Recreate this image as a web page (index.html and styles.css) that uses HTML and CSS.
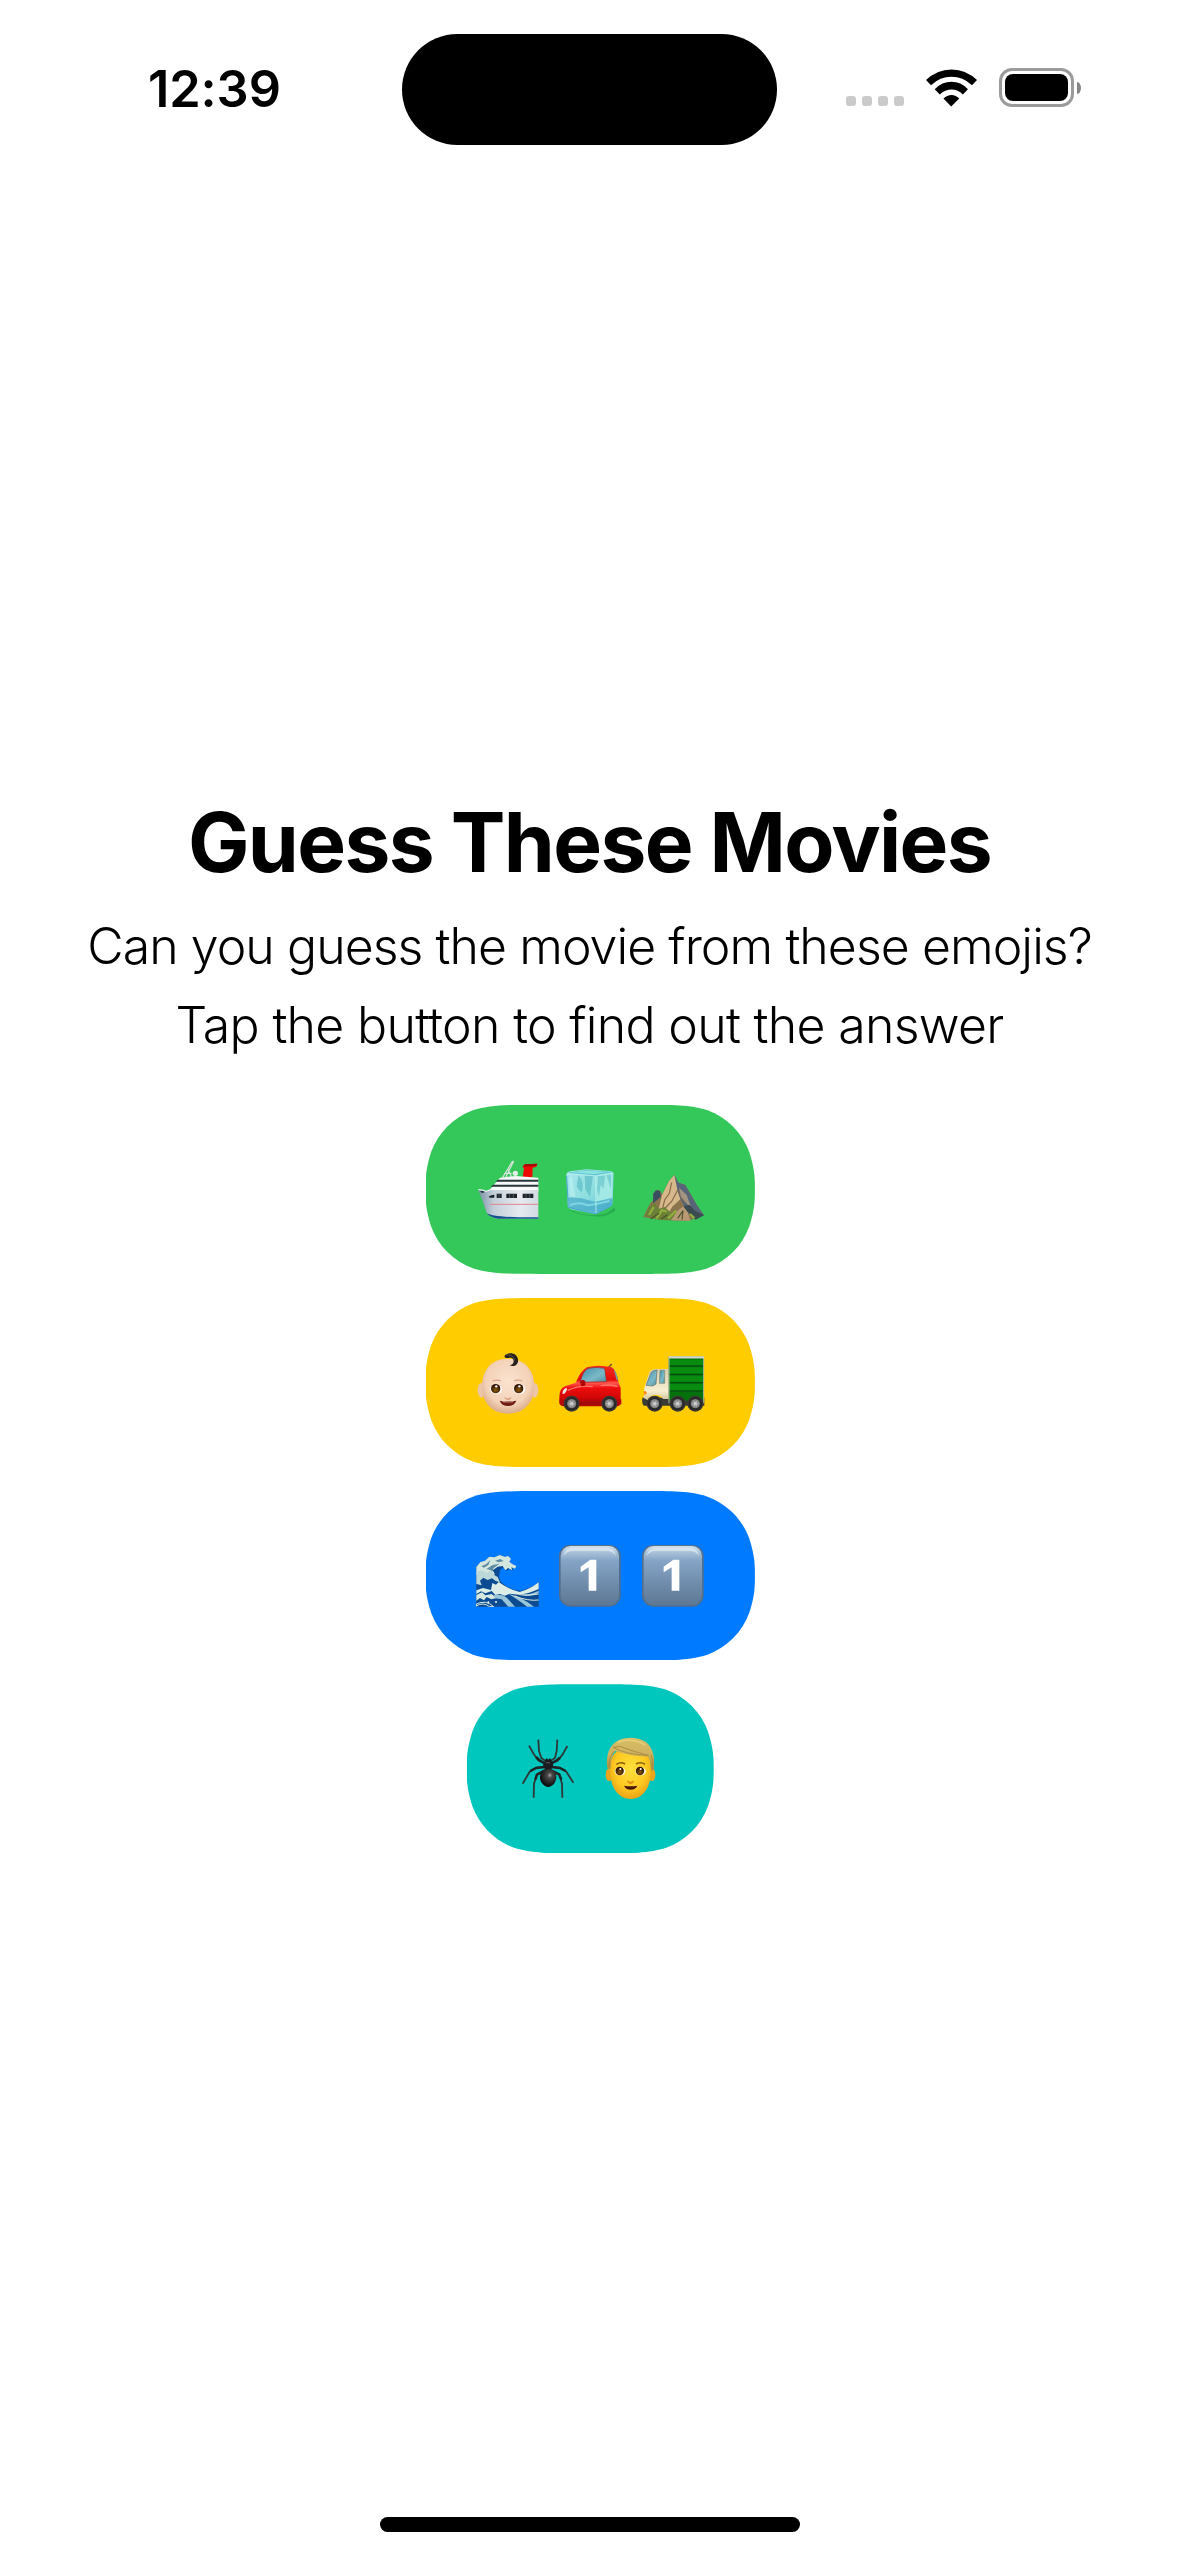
FILE: index.html
```html
<!DOCTYPE html>
<html lang="en">
<head>
<meta charset="utf-8">
<title>Guess These Movies</title>
<link rel="stylesheet" href="styles.css">
</head>
<body>
<svg class="defs" aria-hidden="true">
  <defs>
    <linearGradient id="hull" x1="0" x2="1"><stop offset="0" stop-color="#7890a5"/><stop offset=".25" stop-color="#c3ced8"/><stop offset=".7" stop-color="#e6eaf0"/><stop offset="1" stop-color="#d3dae2"/></linearGradient>
    <linearGradient id="ice" x1="0" y1="0" x2="1" y2="1"><stop offset="0" stop-color="#a8e6ee"/><stop offset=".5" stop-color="#8fdfdf"/><stop offset="1" stop-color="#5fbfdc"/></linearGradient>
    <radialGradient id="skin" cx=".5" cy=".42" r=".6"><stop offset="0" stop-color="#fbe3cf"/><stop offset=".7" stop-color="#f3d2b8"/><stop offset="1" stop-color="#d9a988"/></radialGradient>
    <radialGradient id="face" cx=".5" cy=".4" r=".65"><stop offset="0" stop-color="#ffe03c"/><stop offset=".6" stop-color="#fdc921"/><stop offset="1" stop-color="#e79a12"/></radialGradient>
    <linearGradient id="hair" x1="0" y1="0" x2="0" y2="1"><stop offset="0" stop-color="#d8be68"/><stop offset=".5" stop-color="#cfb260"/><stop offset="1" stop-color="#a98736"/></linearGradient>
    <linearGradient id="red" x1="0" y1="0" x2="0" y2="1"><stop offset="0" stop-color="#f52a1c"/><stop offset=".35" stop-color="#e50b0b"/><stop offset=".42" stop-color="#ff5a50"/><stop offset=".55" stop-color="#ee0d0d"/><stop offset="1" stop-color="#b80000"/></linearGradient>
    <linearGradient id="glass" x1="0" y1="0" x2="1" y2="1"><stop offset="0" stop-color="#3d8ca6"/><stop offset=".6" stop-color="#7cb9c8"/><stop offset="1" stop-color="#4b8ea0"/></linearGradient>
    <linearGradient id="cab" x1="0" y1="0" x2="0" y2="1"><stop offset="0" stop-color="#d9cfae"/><stop offset=".7" stop-color="#f8efd0"/><stop offset="1" stop-color="#cfc299"/></linearGradient>
    <linearGradient id="key" x1="0" y1="0" x2="0" y2="1"><stop offset="0" stop-color="#d3e1ec"/><stop offset=".12" stop-color="#a5bfd6"/><stop offset=".24" stop-color="#86a5c6"/><stop offset=".6" stop-color="#718eae"/><stop offset="1" stop-color="#5d7893"/></linearGradient>
    <radialGradient id="abdomen" cx=".6" cy=".35" r=".6"><stop offset="0" stop-color="#a5a5a5"/><stop offset=".25" stop-color="#484848"/><stop offset="1" stop-color="#0c0c0c"/></radialGradient>
    <radialGradient id="iris" cx=".5" cy=".65" r=".55"><stop offset="0" stop-color="#8c5c0c"/><stop offset="1" stop-color="#2c1002"/></radialGradient>
    <radialGradient id="hub"><stop offset="0" stop-color="#e6e6e6"/><stop offset=".6" stop-color="#a0a0a0"/><stop offset="1" stop-color="#6d6d6d"/></radialGradient>
    <g id="wheel"><circle r="24" fill="#3a3733"/><circle r="20" fill="#292828"/><circle r="14" fill="url(#hub)"/><path d="M-10-6L10 6M-10 6L10-6M0-11V11" stroke="#777" stroke-width="2"/><circle r="5" fill="#ccc"/></g>
    <symbol id="keycap" viewBox="281 28 189 189">
      <rect x="281" y="31" width="185" height="185" rx="34" fill="#536f8d"/>
      <rect x="286" y="34" width="175" height="178" rx="30" fill="url(#key)"/>
      <path d="M295 65Q298 40 323 39H424Q449 40 452 65Q445 48 420 48H327Q302 48 295 65Z" fill="#e0ebf2" opacity=".7"/>
      <path d="M346 96L375 75H393V168H370V98L346 113Z" fill="#fff"/>
    </symbol>
  </defs>
</svg>

<div class="screen">
  <header class="status">
    <div class="time">12:39</div>
    <div class="island"></div>
    <div class="indicators">
      <div class="cellular"><i></i><i></i><i></i><i></i></div>
      <svg class="wifi" viewBox="499 146 152 113" role="img" aria-label="Wi-Fi">
        <path d="M499 179Q531 147 575 147T651 179L636 194Q609 169 575 169T514 194Z"/>
        <path d="M525 206Q547 184 575 184T624 206L609 222Q594 207 575 207T540 222Z"/>
        <path d="M551 234Q562 223 575 223T598 234L574 258Z"/>
      </svg>
      <div class="battery"><div class="shell"><div class="charge"></div></div><div class="nub"></div></div>
    </div>
  </header>

  <main class="quiz">
    <h1 class="title">Guess These Movies</h1>
    <p class="line intro">Can you guess the movie from these emojis?</p>
    <p class="line hint">Tap the button to find out the answer</p>

    <div class="answers">
      <button class="movie green" aria-label="Ship, ice, mountain">
        <svg class="emoji" viewBox="33 24 189 189">
          <path d="M113 82L141 36L146 33M122 82L146 34M118 70H140M128 56L140 82" stroke="#d9e5dc" stroke-width="3.5" fill="none"/>
          <circle cx="151" cy="70" r="8" fill="#e4eee8"/>
          <path d="M173 82L177 55L172 51L179 43L217 41L214 50L203 53L202 82Z" fill="#ec0a04"/>
          <path d="M179 43L217 41L214 48L174 50Z" fill="#a80808"/>
          <path d="M105 83L152 78L220 83V125H70L86 105Z" fill="#f5f7f8"/>
          <path d="M98 89H220V95H92ZM84 104H220V110H77Z" fill="#27363b"/>
          <path d="M40 119Q55 119 63 124L79 118H220V206H98Q74 202 65 188L53 154Z" fill="url(#hull)"/>
          <path d="M40 119Q55 119 63 124L79 118H220" stroke="#fff" stroke-width="3" fill="none"/>
          <path d="M65 189Q82 203 220 202V206H98Q74 202 65 189Z" fill="#16508f"/>
          <path d="M75 163H220" stroke="#df8789" stroke-width="3"/>
          <path d="M71 140Q78 134 88 134V143H74ZM95 131H110V144H95ZM124 131H156V144H124ZM173 131H205V144H173Z" fill="#1e242b"/>
          <path d="M102 131V144M134 131V144M145 131V144M183 131V144M194 131V144" stroke="#7d868e" stroke-width="1.5"/>
          <path d="M45 123H56L58 128H49Z" fill="#24384a"/>
        </svg>
        <svg class="emoji" viewBox="26 24 189 189">
          <path d="M52 176Q100 200 142 194Q175 195 192 172L195 182Q160 205 130 198Q75 195 52 176Z" fill="#22994a" opacity=".6"/>
          <path d="M48 76Q49 66 60 64L108 58L180 63Q190 65 190 75L187 160Q186 168 178 171L141 190Q134 193 124 190L62 178Q52 173 52 165Z" fill="url(#ice)"/>
          <path d="M50 68L108 60L187 66L136 76Z" fill="#64c5d5"/>
          <path d="M62 67L110 62L170 66L133 72Z" fill="#8ee5df"/>
          <path d="M136 77L187 68L186 150L138 154Z" fill="#a2e8e4"/>
          <path d="M84 76Q104 95 94 128L79 110ZM103 76H128L119 140L105 118Z" fill="#48adbb" opacity=".5"/>
          <path d="M143 78L164 76L160 116L151 104L146 140L140 120ZM168 75L182 73L182 116Z" fill="#54b7c2" opacity=".5"/>
          <path d="M52 143Q88 140 121 152L136 155L186 143L185 166L138 188L59 175Z" fill="#3fa5c4" opacity=".65"/>
          <path d="M60 165Q85 154 112 166L134 163L178 153" stroke="#7ed6e2" stroke-width="6" fill="none"/>
          <path d="M57 85L65 79L75 142L58 137Z" fill="#c0f4f2" opacity=".6"/>
          <path d="M49 72L130 77Q136 77 136 85L137 190M136 78L189 70" stroke="#b4efef" stroke-width="2.5" fill="none"/>
          <path d="M49 78L54 172L121 188L137 191L183 168" stroke="#419bd0" stroke-width="2.5" fill="none"/>
        </svg>
        <svg class="emoji" viewBox="274 24 189 189">
          <path d="M278 201L291 174L301 157L309 150L308 131L316 121L328 122L335 132L355 93L371 75L384 98L404 105L426 143L437 163L444 174L460 196Q433 202 415 213L330 210Z" fill="#8a744e"/>
          <path d="M308 131L316 121L328 122L331 140L307 160Z" fill="#3b4e5f"/>
          <path d="M355 93L371 75L382 98L380 122L390 147L366 169L350 194L320 207L325 174L334 135Z" fill="#d6b88a"/>
          <path d="M371 75L384 98L404 105L426 143L437 163L460 196L437 201L401 168L388 145L380 118Z" fill="#586477"/>
          <path d="M363 98L356 130L342 150L336 174M381 120L364 153L344 174M384 122L392 142L404 158" stroke="#86694a" stroke-width="3.5" fill="none"/>
          <path d="M385 113L391 140L412 165L421 171L408 135Z" fill="#a39680"/>
          <path d="M282 197L296 171L311 158L325 176L342 171L361 188L379 184L374 210L330 210Z" fill="#6c8038"/>
          <path d="M361 211L380 183L398 169L410 184L419 212Z" fill="#b89a74"/>
          <path d="M398 169L409 184L435 209L460 196L433 182L416 164Z" fill="#3a4c50"/>
          <path d="M295 195L309 171M317 206L334 181L348 184M352 205L377 182M418 192L431 204" stroke="#8fae3c" stroke-width="7" fill="none"/>
          <path d="M300 207L325 190M332 207L350 194M381 205L397 182L394 209" stroke="#4a5430" stroke-width="3.5" fill="none"/>
        </svg>
      </button>

      <button class="movie yellow" aria-label="Baby, car, driver">
        <svg class="emoji" viewBox="33 33 189 189">
          <ellipse cx="49" cy="151" rx="11" ry="22" fill="#edc5a8"/><ellipse cx="209" cy="151" rx="11" ry="22" fill="#edc5a8"/>
          <path d="M129 56C180 56 208 91 208 139C208 190 174 221 129 221S51 190 51 139C51 91 78 56 129 56Z" fill="url(#skin)"/>
          <path d="M118 48C130 34 156 38 159 58C161 74 148 82 134 76C144 74 149 65 144 57C138 49 127 56 121 53Z" fill="#26211f"/>
          <path d="M124 45Q145 42 149 62" stroke="#595450" stroke-width="3" fill="none"/>
          <path d="M82 123Q94 118 107 122M148 122Q160 118 172 123" stroke="#d6a488" stroke-width="3.5" fill="none"/>
          <ellipse cx="93" cy="148" rx="18" ry="14" fill="#fff"/><ellipse cx="163" cy="148" rx="18" ry="14" fill="#fff"/>
          <circle cx="92" cy="146" r="14" fill="url(#iris)"/><circle cx="161" cy="146" r="14" fill="url(#iris)"/>
          <circle cx="94" cy="139" r="3.5" fill="#fff"/><circle cx="163" cy="139" r="3.5" fill="#fff"/>
          <path d="M117 170Q128 179 140 170Q136 181 128 180T117 170Z" fill="#dba080"/>
          <path d="M104 182Q128 187 154 182Q148 198 129 198T104 182Z" fill="#701d16"/>
          <path d="M111 184Q129 188 147 184L142 187H116Z" fill="#f5dcd2"/>
        </svg>
        <svg class="emoji" viewBox="26 33 189 189">
          <path d="M174 83L184 72" stroke="#604b22" stroke-width="4"/>
          <path d="M27 171Q28 143 46 138L76 128Q92 91 110 82Q145 73 184 82Q197 88 205 128L211 143V191Q208 199 196 199H39Q26 197 27 183Z" fill="url(#red)"/>
          <path d="M89 127Q98 91 113 85Q138 79 163 85L169 125Z" fill="url(#glass)" stroke="#ad1613" stroke-width="2"/>
          <path d="M190 88Q199 96 203 120L199 121Z" fill="#6fa1a0"/>
          <path d="M37 162Q35 149 48 143Q54 147 42 161Z" fill="#efe9e3"/>
          <path d="M52 151Q91 134 127 140M151 137Q184 132 202 140" stroke="#ff7469" stroke-width="4" fill="none"/>
          <path d="M28 178H213V193H28Z" fill="#b60809"/>
          <path d="M89 126Q91 118 102 121Q108 126 104 137L93 139Z" fill="#ad0303"/>
          <path d="M88 190H154" stroke="#a00c08" stroke-width="9"/>
          <use href="#wheel" x="64" y="191"/><use href="#wheel" x="177" y="191"/>
        </svg>
        <svg class="emoji" viewBox="274 33 189 189">
          <path d="M275 173H461V197H280Q273 194 275 173Z" fill="#393b37"/>
          <path d="M279 174L281 143L296 97Q302 88 315 87H355V177H337Q331 164 313 165Q296 166 292 181Z" fill="url(#cab)"/>
          <path d="M286 136L301 98Q306 91 319 90L316 132L306 138Z" fill="url(#glass)" stroke="#626c62" stroke-width="2"/>
          <path d="M328 91H342V130H326Z" fill="url(#glass)" stroke="#83866d" stroke-width="2"/>
          <rect x="354" y="50" width="105" height="132" fill="#04720c"/>
          <path d="M355 59H458V76H355ZM355 82H458V101H355ZM355 107H458V125H355ZM355 132H458V151H355Z" fill="#078c10"/>
          <path d="M355 78H458M355 103H458M355 128H458M355 153H458" stroke="#064510" stroke-width="3"/>
          <path d="M355 190V51H459V190" stroke="#b4b7a6" stroke-width="3" fill="none"/><path d="M354 52H460" stroke="#d3d5c6" stroke-width="7"/>
          <path d="M279 154Q286 150 289 160L281 166Z" fill="#ff8a16"/>
          <use href="#wheel" x="312" y="191"/><use href="#wheel" x="381" y="191"/><use href="#wheel" x="434" y="191"/>
        </svg>
      </button>

      <button class="movie blue" aria-label="Ocean, 1, 1">
        <svg class="emoji" viewBox="33 28 189 189">
          <path d="M34 97L46 82L60 78L73 66L88 68L104 61L119 66L130 64L138 73L133 81L142 88L154 94L151 102L142 99L145 108L132 103L125 108L115 98L105 107L102 127L108 142Q137 169 169 168Q201 160 221 142V216H34Z" fill="#0c4b91"/>
          <path d="M34 97L46 82L60 78L73 66L88 68L104 61L119 66L130 64L138 73L133 81L142 88L154 94L150 102L139 98L142 107L129 100L121 107L113 94L98 96L83 107L90 119L76 123L62 117L49 127L34 119Z" fill="#d4e7df"/>
          <path d="M34 113L50 106L64 114L79 107L88 121L98 127L105 143L92 139L81 131L68 136L55 129L45 138L50 152L34 148Z" fill="#bdd8d8"/>
          <path d="M64 103L83 91L104 87L85 101L84 110L73 105ZM49 95L64 88L76 76L70 91L57 99ZM90 78L106 73L116 79L101 83Z" fill="#608ca2"/>
          <path d="M82 145L93 150L101 142Q133 165 164 172Q193 165 221 143V163Q189 178 162 180L134 177L119 183L105 178L91 181L80 169L61 176L48 170L34 178V167L54 160L78 166Z" fill="#dbede6"/>
          <path d="M34 181L51 173L61 182L80 178L95 190L79 194L65 187L57 197L45 190L34 198Z" fill="#d7e8df"/>
          <path d="M87 181Q111 177 126 190L150 216H130L110 194L91 191ZM130 178Q165 184 207 216H186Q154 191 130 178ZM168 180Q195 181 221 168V175Q196 189 168 180Z" fill="#99c5d8"/>
          <path d="M34 208Q63 194 86 216H74Q54 201 34 214ZM149 184Q189 200 221 196M163 180Q190 184 221 178" stroke="#dceadf" stroke-width="3" fill="none"/>
          <circle cx="70" cy="203" r="3" fill="#eef7ee"/><circle cx="93" cy="202" r="3" fill="#eef7ee"/>
        </svg>
        <svg class="emoji"><use href="#keycap"/></svg>
        <svg class="emoji"><use href="#keycap"/></svg>
      </button>

      <button class="movie teal" aria-label="Spider, man">
        <svg class="emoji" viewBox="37 38 189 189">
          <path d="M123 110L110 101L103 80L101 46M137 110L151 101L156 80L158 46M122 118L101 108L87 89L73 64M138 118L159 109L174 90L188 65M121 126L94 131L75 142L54 178M139 126L166 131L185 142L206 175M122 137L96 151L88 178L87 220M138 137L165 151L172 178L173 220" stroke="#2c393b" stroke-width="5.5" fill="none" stroke-linejoin="round"/>
          <path d="M122 118L106 109L94 98M138 118L155 109L166 100M121 128L94 131L77 140M139 128L166 131L183 140M121 138L97 151L92 166M139 138L163 150L170 166" stroke="#1e2426" stroke-width="7.5" fill="none" stroke-linejoin="round"/>
          <path d="M122 107L126 101L131 106L136 101L140 108L146 121L139 137H122L115 122Z" fill="#1a1b1e"/>
          <path d="M131 134C147 134 156 146 155 160C154 176 143 186 131 188C118 186 106 175 106 159C106 146 116 134 131 134Z" fill="url(#abdomen)"/>
          <path d="M123 116Q130 112 136 117" stroke="#6b6e6e" stroke-width="2.5" fill="none"/>
        </svg>
        <svg class="emoji" viewBox="285 38 189 189">
          <ellipse cx="312" cy="151" rx="10" ry="19" fill="#eba51b"/><ellipse cx="441" cy="151" rx="10" ry="19" fill="#eba51b"/>
          <path d="M377 71C421 70 439 92 438 137C438 185 417 224 377 224S315 185 315 137C314 92 333 70 377 71Z" fill="url(#face)"/>
          <path d="M307 131C300 75 325 40 379 40C431 41 454 77 446 136L439 140Q438 109 430 96Q382 98 330 80Q318 94 316 134Z" fill="url(#hair)"/>
          <path d="M325 69Q362 91 430 93Q388 83 344 66ZM326 81Q313 99 313 124M438 91Q445 107 442 127" stroke="#a5873c" stroke-width="2.5" fill="none"/>
          <path d="M337 54Q379 37 421 62" stroke="#eed885" stroke-width="5" fill="none" opacity=".6"/>
          <path d="M334 120Q348 111 360 119M393 119Q408 111 420 120" stroke="#8c5f0c" stroke-width="5" fill="none"/>
          <ellipse cx="345" cy="141" rx="16" ry="12" fill="#fff8de"/><ellipse cx="407" cy="141" rx="16" ry="12" fill="#fff8de"/>
          <circle cx="344" cy="140" r="12.5" fill="url(#iris)"/><circle cx="405" cy="140" r="12.5" fill="url(#iris)"/>
          <circle cx="346" cy="134" r="3" fill="#fff"/><circle cx="407" cy="134" r="3" fill="#fff"/>
          <path d="M366 168Q377 176 388 168Q384 180 376 179T366 168Z" fill="#df8c13"/>
          <path d="M357 184Q377 188 397 184Q392 196 377 196T357 184Z" fill="#4a1606"/>
        </svg>
      </button>
    </div>
  </main>

  <footer class="home"><div class="bar"></div></footer>
</div>
</body>
</html>
```
FILE: styles.css
```css
* { box-sizing: border-box; }

body {
  margin: 0;
  background: #fff;
  color: #000;
  font-family: Inter, "Liberation Sans", sans-serif;
}

.defs { position: absolute; width: 0; height: 0; }

.screen {
  display: flex;
  flex-direction: column;
  width: 1179px;
  height: 2556px;
  overflow: hidden;
}

.status {
  display: grid;
  grid-template-columns: 401.7px 375.6px 1fr;
  height: 177px;
  padding-top: 34px;
}

.time {
  padding-left: 148px;
  font-size: 50.5px;
  font-weight: 600;
  line-height: 109px;
  letter-spacing: -0.1px;
}

.island { height: 111px; border-radius: 56px; background: #000; }

.indicators {
  display: flex;
  align-items: flex-start;
  padding: 34px 0 0 68.7px;
}

.cellular { display: flex; gap: 6px; padding-top: 28px; }
.cellular i { width: 10px; height: 10px; border-radius: 3px; background: #cbcbcb; }

.wifi { width: 51px; height: 38px; margin: 0.5px 0 0 22px; }

.battery { display: flex; align-items: center; gap: 3px; margin-left: 22px; }
.shell { width: 75px; height: 39px; padding: 3px; border: 3px solid #9b9b9b; border-radius: 13px; }
.charge { height: 27px; border-radius: 8px; background: #000; }
.nub { width: 4px; height: 12px; border-radius: 0 4px 4px 0 / 0 6px 6px 0; background: #858585; }

.quiz {
  flex: 1;
  display: flex;
  flex-direction: column;
  align-items: center;
  padding-top: 616px;
}

.title {
  margin: 0;
  font-size: 82px;
  font-weight: 700;
  line-height: 100px;
  letter-spacing: -1.65px;
}

.line {
  margin: 0;
  font-size: 50px;
  font-weight: 300;
  line-height: 60px;
  white-space: nowrap;
}
.intro { margin-top: 23px; letter-spacing: -0.94px; }
.hint { margin-top: 19px; letter-spacing: -0.69px; }

.answers {
  display: flex;
  flex-direction: column;
  align-items: center;
  gap: 24px;
  margin: 49.7px 0 0 1.4px;
}

.movie {
  display: flex;
  gap: 19.7px;
  width: 329.4px;
  height: 169.2px;
  padding: 53.2px 0 0 50.8px;
  border: 0;
  clip-path: path("M114.6 0H214.8C247.8 0 264.3 0 282 5.6C301.4 12.7 316.7 28 323.8 47.4C329.4 65.1 329.4 74 329.4 84.6C329.4 95.2 329.4 104.1 323.8 121.8C316.7 141.2 301.4 156.5 282 163.6C264.3 169.2 247.8 169.2 214.8 169.2H114.6C81.6 169.2 65.1 169.2 47.4 163.6C28 156.5 12.7 141.2 5.6 121.8C0 104.1 0 95.2 0 84.6C0 74 0 65.1 5.6 47.4C12.7 28 28 12.7 47.4 5.6C65.1 0 81.6 0 114.6 0Z");
}

.green { background: #34c759; }
.yellow { background: #fc0; }
.blue { background: #007aff; }
.teal {
  width: 247px;
  background: #00c7be;
  clip-path: path("M114.6 0H132.4C165.4 0 181.9 0 199.6 5.6C219 12.7 234.3 28 241.4 47.4C247 65.1 247 74 247 84.6C247 95.2 247 104.1 241.4 121.8C234.3 141.2 219 156.5 199.6 163.6C181.9 169.2 165.4 169.2 132.4 169.2H114.6C81.6 169.2 65.1 169.2 47.4 163.6C28 156.5 12.7 141.2 5.6 121.8C0 104.1 0 95.2 0 84.6C0 74 0 65.1 5.6 47.4C12.7 28 28 12.7 47.4 5.6C65.1 0 81.6 0 114.6 0Z");
}

.emoji { flex: none; width: 63px; height: 63px; }

.home { height: 39px; }
.bar { width: 420px; height: 15px; margin: 0 auto; border-radius: 8px; background: #000; }
```
